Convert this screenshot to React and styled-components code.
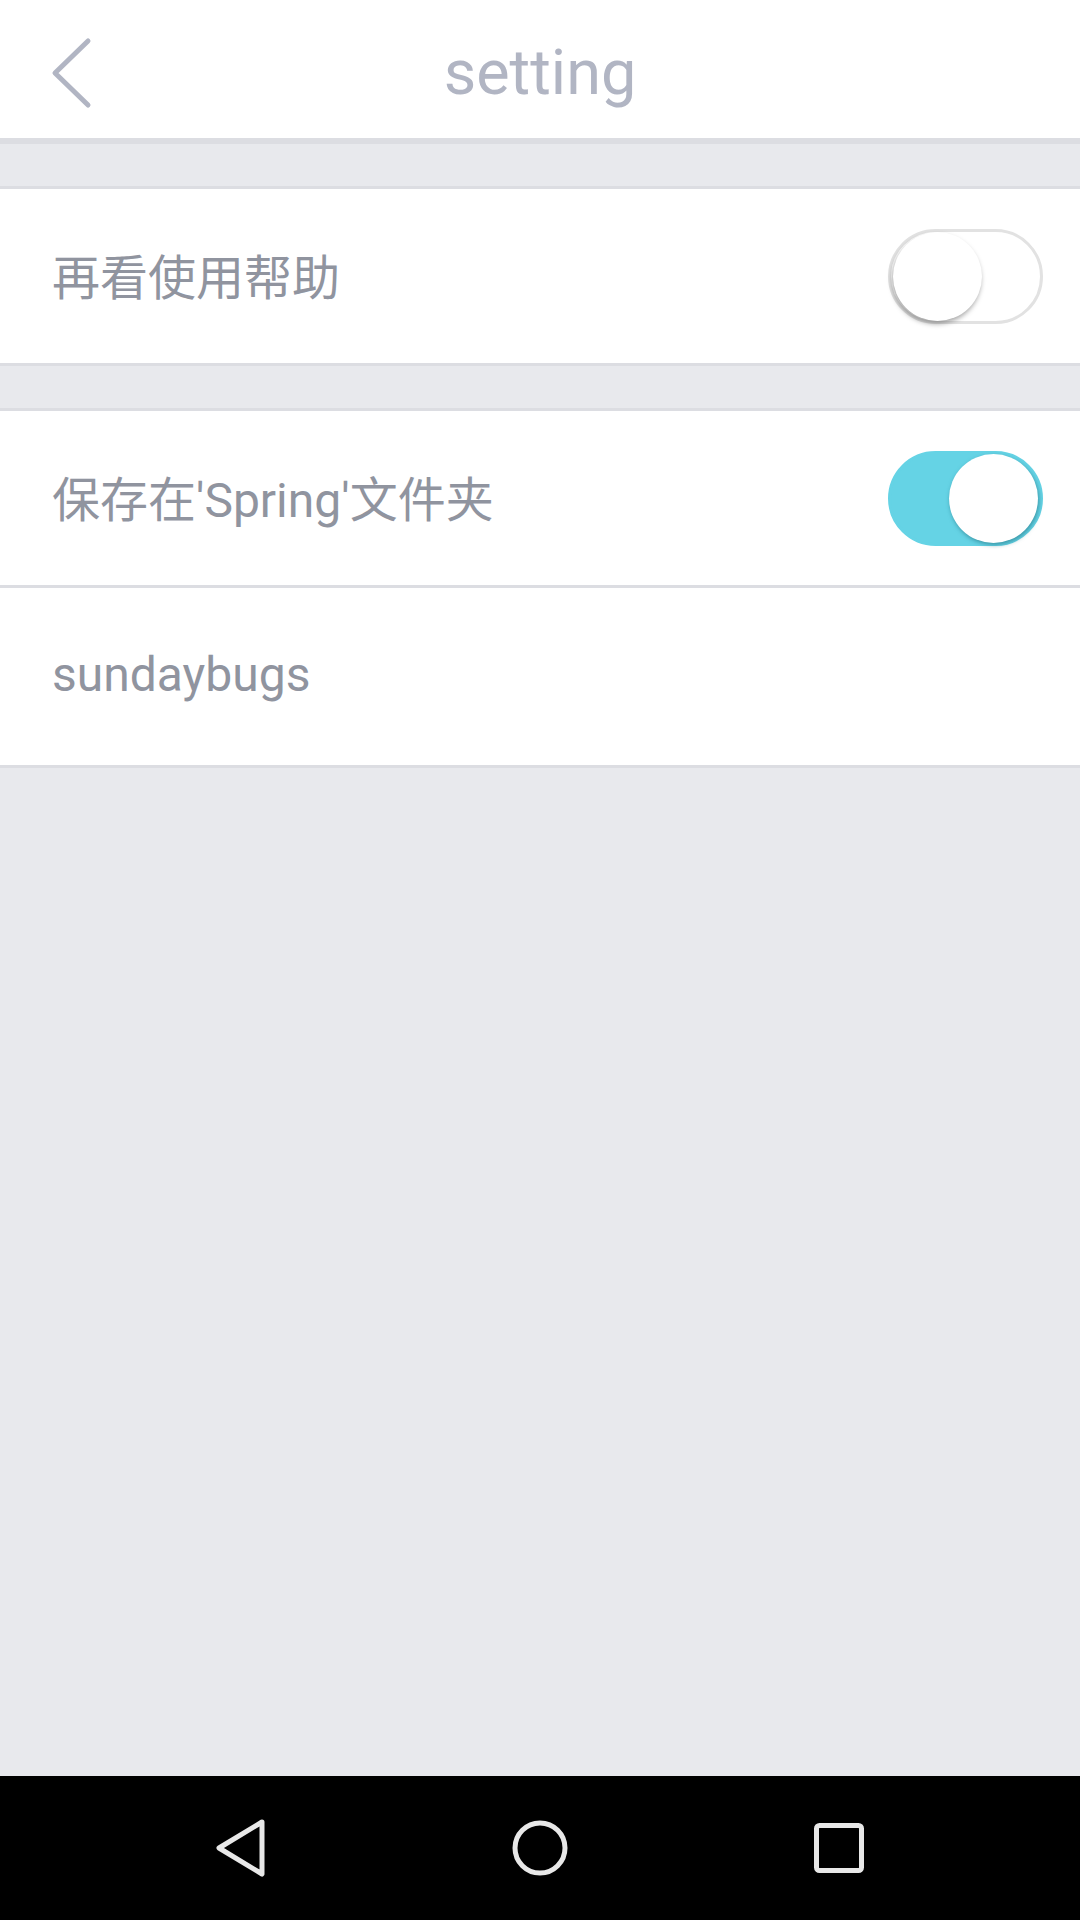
import React, { useState } from 'react'
import styled, { createGlobalStyle } from 'styled-components'

const GlobalStyle = createGlobalStyle`
  html, body {
    margin: 0;
    padding: 0;
    background: #e8e9ed;
  }
  * {
    box-sizing: border-box;
  }
`

const Page = styled.div`
  width: 1080px;
  min-height: 1920px;
  display: flex;
  flex-direction: column;
  background: #e8e9ed;
  font-family: Roboto, "Noto Sans CJK SC", sans-serif;
`

const Header = styled.header`
  position: relative;
  height: 144px;
  display: flex;
  align-items: center;
  justify-content: center;
  padding-top: 6px;
  background: #fff;
  border-bottom: 6px solid #dcdde2;
`

const BackButton = styled.button`
  position: absolute;
  left: 50px;
  top: 36px;
  width: 44px;
  height: 74px;
  padding: 0;
  border: 0;
  background: none;
  display: flex;
  align-items: center;
  justify-content: center;
`

const Title = styled.h1`
  margin: 0;
  font-size: 63px;
  font-weight: 400;
  color: #b1b5c3;
`

const Content = styled.main`
  flex: 1;
  display: flex;
  flex-direction: column;
`

const Group = styled.section`
  margin-top: 42px;
  background: #fff;
  border-top: 3px solid #dcdde2;
  border-bottom: 3px solid #dcdde2;
`

const Row = styled.div`
  height: ${p => p.$height || 174}px;
  display: flex;
  align-items: center;
  justify-content: space-between;
  padding: 0 37px 4px 52px;
  & + & {
    border-top: 3px solid #dcdde2;
  }
`

const Label = styled.span`
  font-size: 48px;
  color: #90949f;
`

const Track = styled.button`
  width: 155px;
  height: 95px;
  margin-top: 4px;
  padding: 2px;
  border-radius: 48px;
  display: flex;
  align-items: center;
  justify-content: ${p => (p.$on ? 'flex-end' : 'flex-start')};
  background: ${p => (p.$on ? '#65d3e5' : '#fff')};
  border: 3px solid ${p => (p.$on ? '#65d3e5' : '#e2e2e2')};
  cursor: pointer;
`

const Knob = styled.span`
  width: 89px;
  height: 89px;
  border-radius: 50%;
  background: #fff;
  box-shadow: ${p =>
    p.$on
      ? '1px 2px 4px rgba(30, 110, 125, 0.6)'
      : '-1px 3px 5px rgba(0, 0, 0, 0.35)'};
`

const NavBar = styled.nav`
  height: 144px;
  background: #000;
  display: flex;
  align-items: center;
  justify-content: center;
  gap: 246px;
`

const Toggle = ({ initial }) => {
  const [on, setOn] = useState(initial)
  return (
    <Track $on={on} onClick={() => setOn(!on)}>
      <Knob $on={on} />
    </Track>
  )
}

const App = () => {
  return (
    <Page>
      <GlobalStyle />
      <Header>
        <BackButton aria-label='back'>
          <svg width='44' height='74' viewBox='0 0 44 74'>
            <polyline
              points='38,5 5,37 38,69'
              fill='none'
              stroke='#b1b5c3'
              strokeWidth='5'
              strokeLinecap='round'
              strokeLinejoin='round'
            />
          </svg>
        </BackButton>
        <Title>setting</Title>
      </Header>
      <Content>
        <Group>
          <Row>
            <Label>再看使用帮助</Label>
            <Toggle initial={false} />
          </Row>
        </Group>
        <Group>
          <Row>
            <Label>保存在'Spring'文件夹</Label>
            <Toggle initial={true} />
          </Row>
          <Row $height={180}>
            <Label>sundaybugs</Label>
          </Row>
        </Group>
      </Content>
      <NavBar>
        <svg width='50' height='58' viewBox='0 0 50 58'>
          <polygon
            points='46,3 3,29 46,55'
            fill='none'
            stroke='#e8e8e8'
            strokeWidth='5'
            strokeLinejoin='round'
          />
        </svg>
        <svg width='56' height='56' viewBox='0 0 56 56'>
          <circle cx='28' cy='28' r='25' fill='none' stroke='#e8e8e8' strokeWidth='5' />
        </svg>
        <svg width='50' height='50' viewBox='0 0 50 50'>
          <rect x='2.5' y='2.5' width='45' height='45' rx='3' fill='none' stroke='#e8e8e8' strokeWidth='5' />
        </svg>
      </NavBar>
    </Page>
  )
}

export default App
